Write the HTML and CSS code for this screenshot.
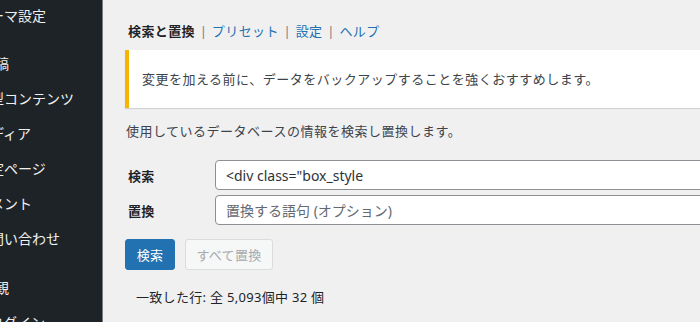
FILE: index.html
```html
<!DOCTYPE html>
<html lang="ja">
<head>
    <meta charset="utf-8">
    <title>検索と置換</title>
    <link rel="stylesheet" href="styles.css">
</head>
<body>
    <!-- Admin menu (links zijn half buiten beeld) -->
    <div class="adminmenu">
        <div class="menu-item first">テーマ設定</div>
        <div class="menu-item short sep">投稿</div>
        <div class="menu-item">定型コンテンツ</div>
        <div class="menu-item">メディア</div>
        <div class="menu-item">固定ページ</div>
        <div class="menu-item">コメント</div>
        <div class="menu-item">お問い合わせ</div>
        <div class="menu-item short sep2">外観</div>
        <div class="menu-item login">ログイン</div>
    </div>

    <div class="content">
        <div class="tabs">
            <span class="tab current">検索と置換</span>
            <span class="pipe">|</span>
            <a class="tab" href="#">プリセット</a>
            <span class="pipe">|</span>
            <a class="tab" href="#">設定</a>
            <span class="pipe">|</span>
            <a class="tab" href="#">ヘルプ</a>
        </div>

        <div class="notice">変更を加える前に、データをバックアップすることを強くおすすめします。</div>

        <p class="intro">使用しているデータベースの情報を検索し置換します。</p>

        <div class="form-row">
            <label for="search">検索</label>
            <input type="text" id="search" value='&lt;div class="box_style'>
        </div>
        <div class="form-row">
            <label for="replace">置換</label>
            <input type="text" id="replace" placeholder="置換する語句 (オプション)">
        </div>

        <div class="actions">
            <button class="button primary">検索</button>
            <button class="button disabled" disabled>すべて置換</button>
        </div>

        <p class="result">一致した行: 全 5,093個中 32 個</p>
    </div>
</body>
</html>
```

FILE: styles.css
```css
body {
    margin: 0;
    display: flex;
    height: 322px;
    overflow: hidden;
    background-color: #f0f0f1;
    color: #3c434a;
    font-family: "Noto Sans", "Noto Sans CJK JP", sans-serif;
    font-size: 13px;
    letter-spacing: 0.3px;
}

/* Zijbalk */
.adminmenu {
    width: 102px;
    flex-shrink: 0;
    background-color: #1d2327;
    border-right: 1px solid #787c82;
    overflow: hidden;
}

.menu-item {
    color: #f0f0f1;
    font-size: 14px;
    letter-spacing: 0;
    line-height: 35px;
    white-space: nowrap;
    margin-left: -24px;
}

.menu-item.first {
    margin-top: -2px;
}

.menu-item.short {
    margin-left: -19px;
}

.menu-item.sep {
    margin-top: 13px;
}

.menu-item.sep2 {
    margin-top: 14px;
}

.menu-item.login {
    margin-left: -11px;
}

/* Inhoud */
.content {
    flex: 1;
    padding: 21px 0 0 22px;
    overflow: hidden;
    white-space: nowrap;
}

.tabs {
    line-height: 20px;
    padding-left: 3px;
}

.tab {
    color: #2271b1;
    text-decoration: none;
    letter-spacing: 0.4px;
}

.tab.current {
    color: #1d2327;
    font-weight: 700;
}

.pipe {
    color: #787c82;
    margin: 0 1px;
}

.notice {
    margin-top: 9px;
    background-color: #fff;
    border-left: 4px solid #f7b500;
    box-shadow: 0 1px 1px rgba(0, 0, 0, 0.12);
    padding: 19px 12px 19px 13px;
    line-height: 20px;
    letter-spacing: 0.5px;
}

.intro {
    margin: 13px 0 0 1px;
    line-height: 20px;
    letter-spacing: 0.5px;
}

.form-row {
    display: flex;
    align-items: center;
    margin-top: 5px;
}

.intro + .form-row {
    margin-top: 19px;
}

.form-row label {
    width: 87px;
    padding-left: 3px;
    font-weight: 600;
    color: #1d2327;
}

.form-row input {
    flex: 1;
    margin-right: -20px;
    height: 30px;
    box-sizing: border-box;
    border: 1px solid #8c8f94;
    border-radius: 4px;
    padding: 0 10px;
    font-family: "Noto Sans", "Noto Sans CJK JP", sans-serif;
    font-size: 14px;
    color: #2c3338;
    background-color: #fff;
}

.form-row input::placeholder {
    color: #646970;
}

.actions {
    display: flex;
    gap: 10px;
    margin-top: 14px;
}

.button {
    height: 31px;
    border-radius: 3px;
    padding: 0 10px;
    font-family: "Noto Sans", "Noto Sans CJK JP", sans-serif;
    font-size: 13px;
    letter-spacing: 0.3px;
}

.button.primary {
    background-color: #2271b1;
    border: 1px solid #2271b1;
    color: #fff;
    width: 50px;
}

.button.disabled {
    background-color: #f6f7f7;
    border: 1px solid #dcdcde;
    color: #a7aaad;
    width: 88px;
}

.result {
    margin: 17px 0 0 11px;
    line-height: 20px;
    color: #1d2327;
}
```
